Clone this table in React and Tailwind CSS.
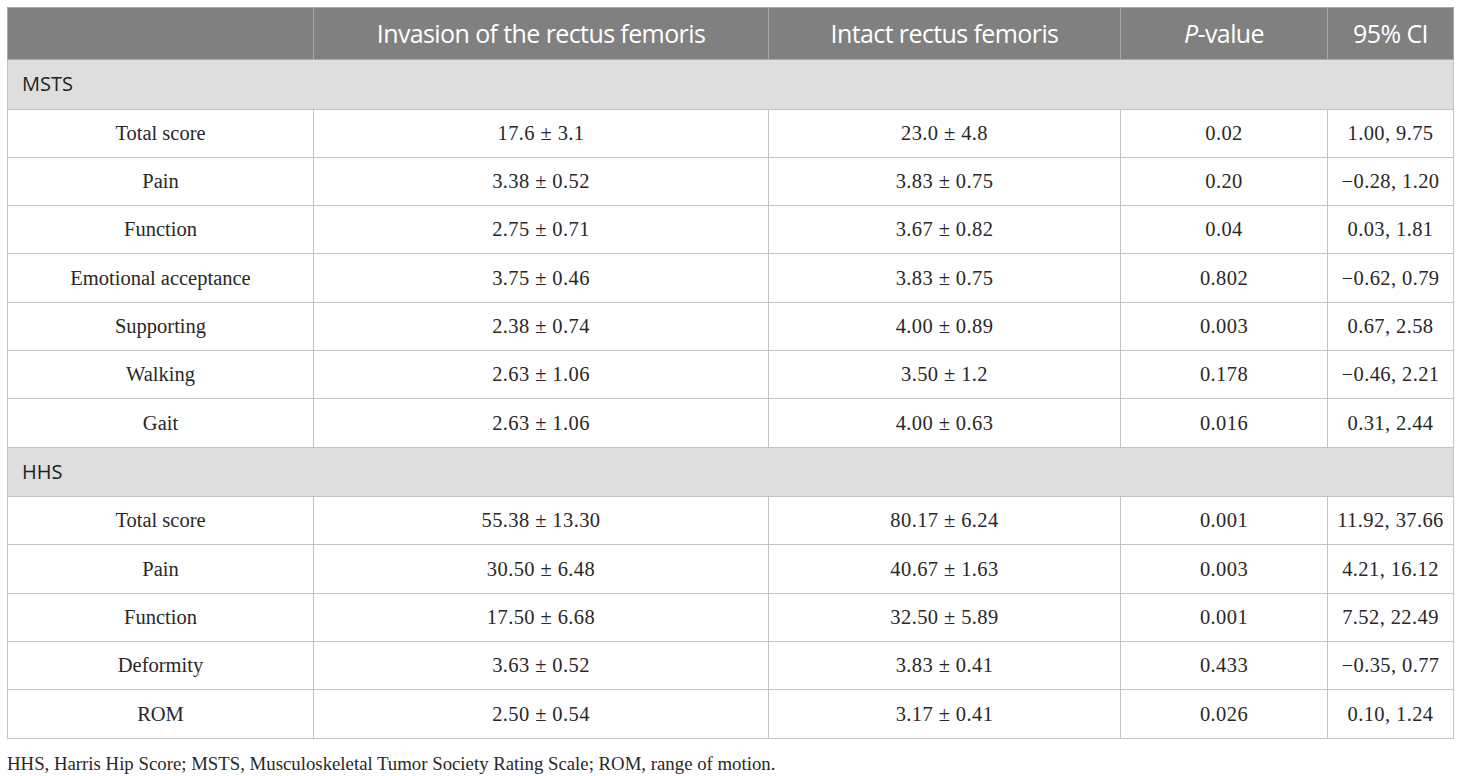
const cols = ['w-[306px]', 'w-[455px]', 'w-[352px]', 'w-[207px]', 'w-[126px]'];

const sections = [
    {
        title: 'MSTS',
        rows: [
            ['Total score', '17.6 ± 3.1', '23.0 ± 4.8', '0.02', '1.00, 9.75'],
            ['Pain', '3.38 ± 0.52', '3.83 ± 0.75', '0.20', '−0.28, 1.20'],
            ['Function', '2.75 ± 0.71', '3.67 ± 0.82', '0.04', '0.03, 1.81'],
            ['Emotional acceptance', '3.75 ± 0.46', '3.83 ± 0.75', '0.802', '−0.62, 0.79'],
            ['Supporting', '2.38 ± 0.74', '4.00 ± 0.89', '0.003', '0.67, 2.58'],
            ['Walking', '2.63 ± 1.06', '3.50 ± 1.2', '0.178', '−0.46, 2.21'],
            ['Gait', '2.63 ± 1.06', '4.00 ± 0.63', '0.016', '0.31, 2.44'],
        ],
    },
    {
        title: 'HHS',
        rows: [
            ['Total score', '55.38 ± 13.30', '80.17 ± 6.24', '0.001', '11.92, 37.66'],
            ['Pain', '30.50 ± 6.48', '40.67 ± 1.63', '0.003', '4.21, 16.12'],
            ['Function', '17.50 ± 6.68', '32.50 ± 5.89', '0.001', '7.52, 22.49'],
            ['Deformity', '3.63 ± 0.52', '3.83 ± 0.41', '0.433', '−0.35, 0.77'],
            ['ROM', '2.50 ± 0.54', '3.17 ± 0.41', '0.026', '0.10, 1.24'],
        ],
    },
];

const sans = "font-['Open_Sans',sans-serif]";
const serif = "font-['Liberation_Serif','Times_New_Roman',serif]";

export default function App() {
    return (
        <div className="bg-white w-[1460px] h-[776px] pt-[7px] pl-[7px]">
            <table className="border-collapse w-[1446px] table-fixed border border-[#c4c4c4]">
                <colgroup>
                    {cols.map((c, i) => <col key={i} className={c} />)}
                </colgroup>
                <thead>
                    <tr className={`h-[52px] bg-[#808080] text-white text-[25px] ${sans} tracking-[-0.6px]`}>
                        <th className="border border-[#a8a8a8] font-normal"></th>
                        <th className="border border-[#a8a8a8] font-normal">Invasion of the rectus femoris</th>
                        <th className="border border-[#a8a8a8] font-normal">Intact rectus femoris</th>
                        <th className="border border-[#a8a8a8] font-normal"><i>P</i>-value</th>
                        <th className="border border-[#a8a8a8] font-normal">95% CI</th>
                    </tr>
                </thead>
                <tbody>
                    {sections.map((s) => (
                        <SectionRows key={s.title} section={s} />
                    ))}
                </tbody>
            </table>
            <p className={`${serif} text-[18.8px] text-[#2a2728] mt-[16px] leading-none`}>
                HHS, Harris Hip Score; MSTS, Musculoskeletal Tumor Society Rating Scale; ROM, range of motion.
            </p>
        </div>
    );
}

function SectionRows({ section }) {
    return (
        <>
            <tr className="h-[49.5px] bg-[#dedede]">
                <td colSpan={5} className={`border border-[#c4c4c4] px-[14px] text-[20px] text-[#231f20] ${sans}`}>
                    {section.title}
                </td>
            </tr>
            {section.rows.map((r, i) => (
                <tr key={i} className={`h-[48.3px] ${serif} text-[20.5px] text-[#2a2728]`}>
                    {r.map((c, j) => (
                        <td key={j} className={`border border-[#c4c4c4] text-center ${j > 0 ? 'tracking-[0.4px]' : ''}`}>{c}</td>
                    ))}
                </tr>
            ))}
        </>
    );
}
